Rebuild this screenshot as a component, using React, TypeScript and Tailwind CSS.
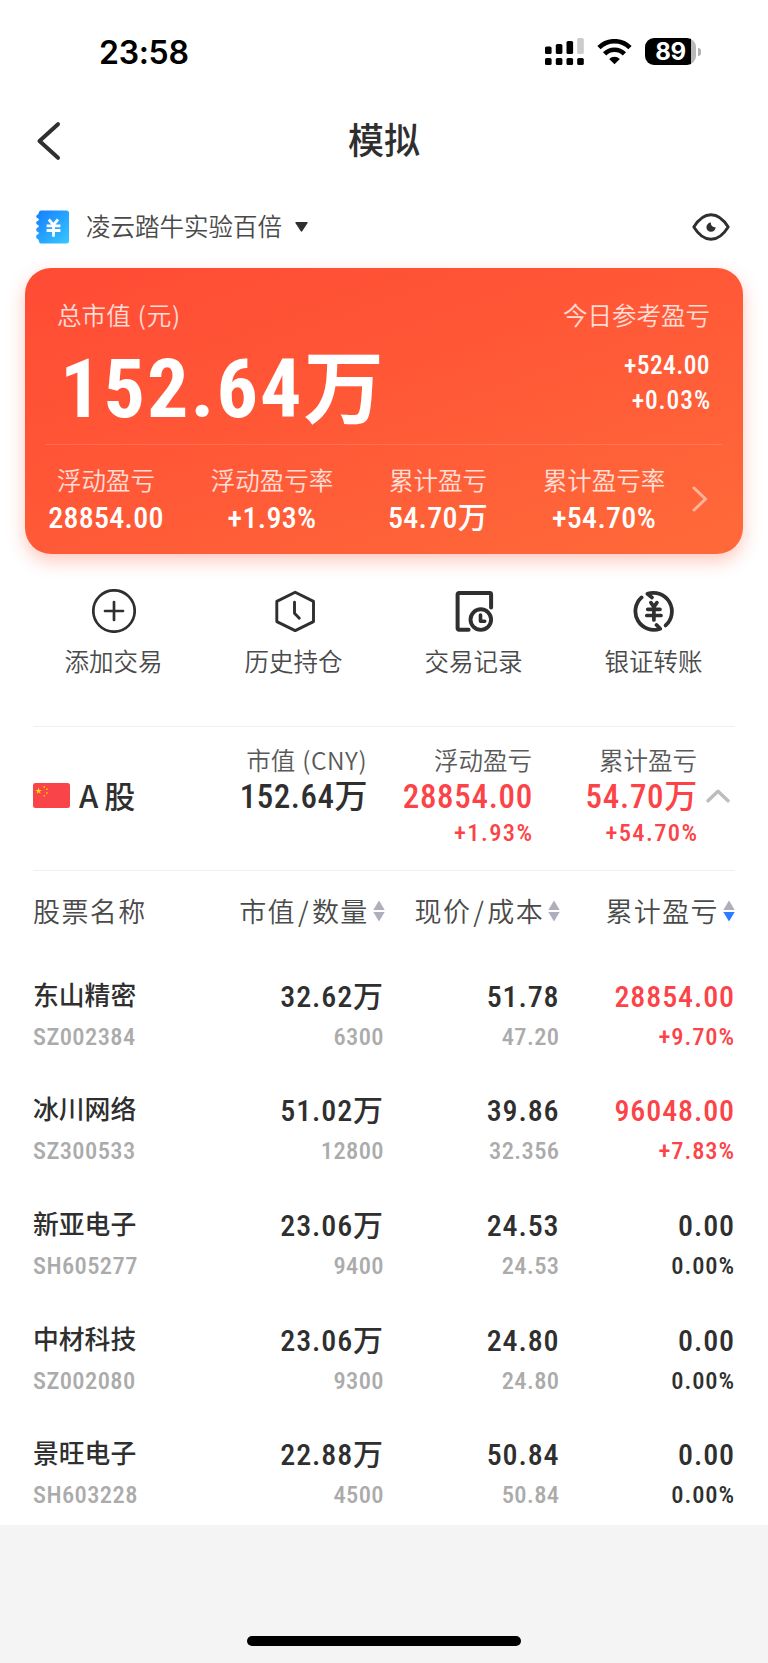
import { clsx } from 'clsx';

const stats = [
  { label: '浮动盈亏', value: '28854.00' },
  { label: '浮动盈亏率', value: '+1.93%' },
  { label: '累计盈亏', value: '54.70万' },
  { label: '累计盈亏率', value: '+54.70%' },
];

const holdings = [
  { name: '东山精密', code: 'SZ002384', value: '32.62万', qty: '6300', price: '51.78', cost: '47.20', pnl: '28854.00', pct: '+9.70%', up: true },
  { name: '冰川网络', code: 'SZ300533', value: '51.02万', qty: '12800', price: '39.86', cost: '32.356', pnl: '96048.00', pct: '+7.83%', up: true },
  { name: '新亚电子', code: 'SH605277', value: '23.06万', qty: '9400', price: '24.53', cost: '24.53', pnl: '0.00', pct: '0.00%', up: false },
  { name: '中材科技', code: 'SZ002080', value: '23.06万', qty: '9300', price: '24.80', cost: '24.80', pnl: '0.00', pct: '0.00%', up: false },
  { name: '景旺电子', code: 'SH603228', value: '22.88万', qty: '4500', price: '50.84', cost: '50.84', pnl: '0.00', pct: '0.00%', up: false },
];

const num = "font-['Roboto','Noto_Sans_CJK_SC',sans-serif] [font-stretch:85%]";
// the negative margin cancels the tracking after the last digit
const main = '-mr-px text-[30px] leading-[41px] font-medium tracking-[0.9px]';
const sub = '-mr-px text-[24.5px] leading-[39px] font-medium';
const stroke = { fill: 'none', stroke: 'currentColor', strokeLinecap: 'round', strokeLinejoin: 'round' } as const;

function AddIcon() {
  return (
    <svg width="44" height="44" viewBox="0 0 44 44" strokeWidth="2.7" {...stroke}>
      <circle cx="22" cy="22" r="20.7" />
      <path d="M22 13v18M13 22h18" />
    </svg>
  );
}

function HistoryIcon() {
  return (
    <svg width="44" height="44" viewBox="0 0 44 44" strokeWidth="2.9" {...stroke}>
      <path d="M23.2 3.2 41.5 12.4v20.2L23.2 41.6 4.8 32.6V12.4z" />
      <path d="M22.5 13.2v11l4.8 5" />
    </svg>
  );
}

function RecordIcon() {
  return (
    <svg width="44" height="44" viewBox="0 0 44 44" strokeWidth="4" {...stroke}>
      <path d="M39.1 18.5V5.5a1.4 1.4 0 0 0-1.4-1.4H7a1.4 1.4 0 0 0-1.4 1.4v33.8a1.4 1.4 0 0 0 1.4 1.4h9.6" />
      <circle cx="28.8" cy="30.6" r="10.3" strokeWidth="3.9" />
      <path d="M28.5 26v6.2h4.2" strokeWidth="3.6" />
    </svg>
  );
}

function TransferIcon() {
  return (
    <svg width="44" height="44" viewBox="0 0 44 44" strokeWidth="3.8" {...stroke}>
      <path d="M9.6 8.4A18.6 18.6 0 0 0 28.2 39.8L24.6 36" />
      <path d="M33.6 36.4A18.6 18.6 0 0 0 15.4 4.8L20 8.4" />
      <path d="M18.9 13.6 21.9 17.8 24.9 13.6M15.7 20.3H28M14.8 26.5H29M21.9 18.5V31" strokeWidth="3.7" />
    </svg>
  );
}

const actions = [
  { label: '添加交易', icon: AddIcon },
  { label: '历史持仓', icon: HistoryIcon },
  { label: '交易记录', icon: RecordIcon },
  { label: '银证转账', icon: TransferIcon },
];

function StatusBar() {
  return (
    <div className="flex h-[103px] items-center justify-between pr-[67px] pl-[99px]">
      <span className="pt-[3px] font-['Inter',sans-serif] text-[32px] leading-none font-semibold tracking-[-0.3px] text-black">23:58</span>
      <div className="flex items-center">
        <svg width="39" height="27" viewBox="0 0 39 27">
          <rect x="0" y="8.5" width="6.6" height="7.5" rx="1.6" />
          <rect x="10.8" y="6" width="6.6" height="10" rx="1.6" />
          <rect x="21.5" y="3" width="6.6" height="13" rx="1.6" />
          <rect x="32.2" y="0" width="6.6" height="16" rx="1.6" fill="#cccccc" />
          <rect x="0" y="20" width="6.6" height="7" rx="1.6" />
          <rect x="10.8" y="20" width="6.6" height="7" rx="1.6" />
          <rect x="21.5" y="20" width="6.6" height="7" rx="1.6" />
          <rect x="32.2" y="20" width="6.6" height="7" rx="1.6" />
        </svg>
        <svg width="35" height="26" viewBox="0 0 35 26" className="ml-[13px]" fill="none" stroke="#000" strokeWidth="4.6">
          <path d="M2 8.6a22 22 0 0 1 31 0" />
          <path d="M7.6 14.8a14 14 0 0 1 19.8 0" />
          <path d="M12.2 20a7.6 7.6 0 0 1 10.6 0L17.5 25.2z" fill="#000" stroke="none" />
        </svg>
        <div className="ml-[13px] flex items-center">
          <div className="flex h-[27px] w-[51px] items-center justify-center rounded-[9px] bg-[linear-gradient(90deg,#000_90%,#b9b9b9_90%)]">
            <span className="pt-px font-['Inter',sans-serif] text-[24px] leading-none font-bold tracking-[-0.4px] text-white">89</span>
          </div>
          <div className="ml-[2px] h-[8px] w-[3px] rounded-r-full bg-[#b0b0b0]" />
        </div>
      </div>
    </div>
  );
}

function SortArrows({ active = false }: { active?: boolean }) {
  return (
    <svg width="12" height="22" viewBox="0 0 12 22" className="ml-[4px] shrink-0">
      <path d="M6 .5 11.7 10H.3z" fill="#aeafbd" />
      <path d="M6 21.5.3 12h11.4z" fill={active ? '#2b7cff' : '#aeafbd'} />
    </svg>
  );
}

function SummaryCard() {
  return (
    <section className="mx-[25px] mt-[0.5px] h-[286.5px] rounded-[26px] bg-[linear-gradient(160deg,#ff4b34_0%,#ff5937_50%,#ff6a39_100%)] pt-[29px] text-white shadow-[0_7px_18px_rgba(255,84,52,0.32)]">
      <div className="flex h-[147px] justify-between pr-[33px] pl-[32px]">
        <div>
          <p className="text-[24.5px] leading-[36px] font-[350] tracking-[0.1px] text-white/80">
            总市值<span className="ml-[7px] tracking-[0.8px]">(元)</span>
          </p>
          <p className={clsx(num, 'mt-[14px] pl-[3px] text-[82px] leading-[84px] font-bold tracking-[2.1px]')}>
            152.64<span className="text-[80px]">万</span>
          </p>
        </div>
        <div className="text-right">
          <p className="text-[24.5px] leading-[36px] font-[350] text-white/80">今日参考盈亏</p>
          <div className={clsx(num, 'mt-[15px] text-[25.5px] leading-[35px] font-medium')}>
            <p className="tracking-[0.4px]">+524.00</p>
            <p className="-mr-px tracking-[0.9px]">+0.03%</p>
          </div>
        </div>
      </div>
      <div className="mr-[21px] ml-[20px] h-px bg-white/15" />
      <div className="flex items-start pt-[17px]">
        <div className="-ml-[2px] grid w-[664px] shrink-0 grid-cols-4 text-center">
          {stats.map((item) => (
            <div key={item.label}>
              <p className="text-[24.5px] leading-[36px] font-[350] text-white/80">{item.label}</p>
              <p className={clsx(num, 'pt-px text-[30px] leading-[38px] font-medium tracking-[0.3px]')}>{item.value}</p>
            </div>
          ))}
        </div>
        <svg width="16" height="26" viewBox="0 0 16 26" strokeWidth="3" className="mt-[24px] ml-[4.5px] text-white/50" {...stroke}>
          <path d="m2 2 11.5 11L2 24" />
        </svg>
      </div>
    </section>
  );
}

function Flag() {
  return (
    <svg width="37" height="25" viewBox="0 0 37 25">
      <rect width="37" height="25" rx="2.5" fill="#f94449" />
      <path d="m5.6 4.6.8 2.3h2.4l-1.9 1.5.7 2.3-2-1.4-2 1.4.7-2.3-1.9-1.5h2.4z" fill="#ffe600" />
      <g fill="#ffc400">
        <circle cx="11.3" cy="4" r=".9" />
        <circle cx="13.9" cy="6.2" r=".9" />
        <circle cx="13.9" cy="10" r=".9" />
        <circle cx="11.3" cy="12.8" r=".9" />
      </g>
    </svg>
  );
}

function MarketRow() {
  return (
    <section className="mx-[33px] flex h-[145px] border-y border-[#efefef] text-[#2f2f2f]">
      <div className="flex h-[138px] w-[150px] shrink-0 items-center">
        <Flag />
        <span className="ml-[9px] pb-[2px] text-[31px] leading-none font-medium">
          <span>A</span>
          <span className="ml-[6px]">股</span>
        </span>
      </div>
      <div className="w-[184px] pt-[15px] text-right">
        <p className="text-[24.5px] leading-[36px] font-[350] text-[#595959]">
          市值<span className="ml-[7px] tracking-[0.5px]">(CNY)</span>
        </p>
        <p className={clsx(num, '-mr-px pt-px text-[33px] leading-[36px] font-medium tracking-[0.5px]')}>152.64万</p>
      </div>
      {[
        { label: '浮动盈亏', value: '28854.00', pct: '+1.93%' },
        { label: '累计盈亏', value: '54.70万', pct: '+54.70%' },
      ].map((item) => (
        <div key={item.label} className="w-[165px] pt-[15px] text-right">
          <p className="text-[24.5px] leading-[36px] font-[350] text-[#595959]">{item.label}</p>
          <p className={clsx(num, '-mr-px pt-px text-[33px] leading-[36px] font-medium tracking-[0.7px] text-[#fc4347]')}>{item.value}</p>
          <p className={clsx(num, '-mr-[1.5px] text-[24.5px] leading-[35px] font-medium tracking-[1.4px] text-[#fc4347]')}>{item.pct}</p>
        </div>
      ))}
      <svg width="24" height="14" viewBox="0 0 24 14" strokeWidth="3.4" className="mt-[62px] ml-[9px] text-[#bdbdbd]" {...stroke}>
        <path d="m2 11.8 10-9.6 10 9.6" />
      </svg>
    </section>
  );
}

export default function App() {
  return (
    <main className="flex h-[1663px] w-[768px] flex-col bg-white font-['Noto_Sans_CJK_SC',sans-serif] whitespace-nowrap text-[#2f2f2f]">
      <StatusBar />

      <header className="grid h-[75px] grid-cols-3 items-center px-[35px]">
        <svg width="26" height="40" viewBox="0 0 26 40" strokeWidth="4" {...stroke}>
          <path d="M23 3.2 4.5 20 23 36.8" />
        </svg>
        <h1 className="pb-[6px] text-center text-[36px] leading-none font-medium">模拟</h1>
      </header>

      <div className="flex h-[89px] items-center pt-[8px] pr-[38.5px] pl-[36px]">
        <svg width="33" height="34" viewBox="0 0 33 34">
          <defs>
            <linearGradient id="ledger" x1="0" y1="0" x2="1" y2="1">
              <stop offset="0" stopColor="#147dff" />
              <stop offset="1" stopColor="#38c8ff" />
            </linearGradient>
          </defs>
          <path
            d="M5 .5H30.5A2.5 2.5 0 0 1 33 3V31A2.5 2.5 0 0 1 30.5 33.5H5Q3 33.5 2.8 30.8Q2.6 28.6.8 28.4Q-.4 26.6.8 24.8Q3 24.6 2.8 22.8Q2.6 21.8.8 21.4Q-.4 19.8.8 18Q3 17.6 2.8 16Q2.6 15 .8 14.6Q-.4 12.8.8 11.2Q3 10.8 2.8 9.4Q2.6 8.4.8 7.8Q-.4 6.2 1 5Q2.6 4.6 2.7 3Q3 .5 5 .5z"
            fill="url(#ledger)"
          />
          <path d="m12.8 9.5 4.6 5.4 4.6-5.4M10.6 15.9h13.8M10.6 20.5h13.8M17.5 15v11.8" stroke="#fff" strokeWidth="2.8" fill="none" />
        </svg>
        <span className="ml-[17px] text-[24.5px] leading-none font-[350] text-[#4a4a4a]">凌云踏牛实验百倍</span>
        <svg width="13" height="10" viewBox="0 0 13 10" className="ml-[13px]">
          <path d="M1 0h11q1 0 .6.9L7.2 9.3q-.7.9-1.4 0L.4.9Q0 0 1 0z" fill="#2f2f2f" />
        </svg>
        <svg width="38" height="28" viewBox="0 0 38 28" strokeWidth="2.9" className="ml-auto" {...stroke}>
          <path d="M1.8 14C7 5.6 12.5 1.7 19 1.7S31 5.6 36.2 14C31 22.4 25.5 26.3 19 26.3S7 22.4 1.8 14z" />
          <path d="M19 9.6a4.6 4.6 0 1 0 4.6 4.6c-2.8.6-5.2-1.8-4.6-4.6z" fill="currentColor" stroke="none" />
        </svg>
      </div>

      <SummaryCard />

      <nav className="mt-[34.5px] ml-[23.5px] grid h-[137px] w-[720px] grid-cols-4">
        {actions.map(({ label, icon: Icon }) => (
          <a key={label} className="flex flex-col items-center">
            <Icon />
            <span className="mt-[10px] text-[24.5px] leading-[36px] font-[350] text-[#4a4a4a]">{label}</span>
          </a>
        ))}
      </nav>

      <MarketRow />

      <div className="mx-[33px] flex h-[81px] shrink-0 items-center text-[27px] font-[350] tracking-[1.4px] text-[#4a4a4a]">
        <span className="w-[170px]">股票名称</span>
        <div className="flex w-[182px] items-center justify-end">
          市值<span className="mx-[2px]">/</span>数量
          <SortArrows />
        </div>
        <div className="flex w-[175.5px] items-center justify-end">
          现价<span className="mx-[2px]">/</span>成本
          <SortArrows />
        </div>
        <div className="flex w-[175px] items-center justify-end">累计盈亏<SortArrows active /></div>
      </div>

      <ul>
        {holdings.map((row) => (
          <li key={row.code} className={clsx(num, 'mx-[33px] flex h-[114.7px] pt-[24px]')}>
            <div className="w-[170px]">
              <p className="text-[25.8px] leading-[41px] font-medium">{row.name}</p>
              <p className={clsx(sub, 'tracking-[0.4px] text-[#ababab]')}>{row.code}</p>
            </div>
            <div className="w-[180px] text-right">
              <p className={main}>{row.value}</p>
              <p className={clsx(sub, 'tracking-[0.4px] text-[#ababab]')}>{row.qty}</p>
            </div>
            <div className="w-[175.5px] text-right">
              <p className={main}>{row.price}</p>
              <p className={clsx(sub, 'tracking-[0.4px] text-[#ababab]')}>{row.cost}</p>
            </div>
            <div className={clsx('w-[175.5px] text-right', row.up && 'text-[#fc4347]')}>
              <p className={main}>{row.pnl}</p>
              <p className={clsx(sub, 'tracking-[0.9px]')}>{row.pct}</p>
            </div>
          </li>
        ))}
      </ul>

      <footer className="flex flex-1 items-end justify-center bg-[#f4f4f4] pb-[17px]">
        <div className="h-[10px] w-[274px] rounded-full bg-black" />
      </footer>
    </main>
  );
}
